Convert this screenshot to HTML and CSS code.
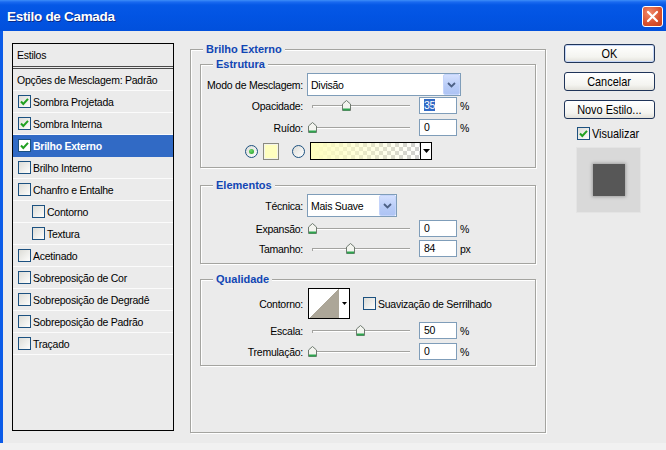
FILE: index.html
```html
<!DOCTYPE html>
<html>
<head>
<meta charset="utf-8">
<link rel="stylesheet" href="styles.css">
</head>
<body>
<div class="window">
  <div class="titlebar">
    <span class="title">Estilo de Camada</span>
    <span class="close"><svg width="13" height="13" viewBox="0 0 13 13"><path d="M2 2 L11 11 M11 2 L2 11" stroke="#fff" stroke-width="2.2" stroke-linecap="round"/></svg></span>
  </div>
  <div class="body">
    <div class="styles">
      <div class="row head">Estilos</div>
      <div class="row opt">Opções de Mesclagem: Padrão</div>
      <div class="row"><span class="cb"><svg width="11" height="11" viewBox="0 0 11 11"><path d="M2 5.5 L4.3 8 L9 2.8" fill="none" stroke="#21a121" stroke-width="2"/></svg></span><span class="txt">Sombra Projetada</span></div>
      <div class="row"><span class="cb"><svg width="11" height="11" viewBox="0 0 11 11"><path d="M2 5.5 L4.3 8 L9 2.8" fill="none" stroke="#21a121" stroke-width="2"/></svg></span><span class="txt">Sombra Interna</span></div>
      <div class="row sel"><span class="cb"><svg width="11" height="11" viewBox="0 0 11 11"><path d="M2 5.5 L4.3 8 L9 2.8" fill="none" stroke="#21a121" stroke-width="2"/></svg></span><span class="txt">Brilho Externo</span></div>
      <div class="row"><span class="cb"></span><span class="txt">Brilho Interno</span></div>
      <div class="row"><span class="cb"></span><span class="txt">Chanfro e Entalhe</span></div>
      <div class="row sub"><span class="cb"></span><span class="txt">Contorno</span></div>
      <div class="row sub"><span class="cb"></span><span class="txt">Textura</span></div>
      <div class="row"><span class="cb"></span><span class="txt">Acetinado</span></div>
      <div class="row"><span class="cb"></span><span class="txt">Sobreposição de Cor</span></div>
      <div class="row"><span class="cb"></span><span class="txt">Sobreposição de Degradê</span></div>
      <div class="row"><span class="cb"></span><span class="txt">Sobreposição de Padrão</span></div>
      <div class="row"><span class="cb"></span><span class="txt">Traçado</span></div>
    </div>

    <div class="group outer">
      <div class="legend outer-legend">Brilho Externo</div>

      <div class="group estrutura">
        <div class="legend">Estrutura</div>
        <div class="frow r-mode">
          <span class="lbl">Modo de Mesclagem:</span>
          <span class="select mode"><span class="val">Divisão</span><span class="dd"><svg width="9" height="6" viewBox="0 0 9 6"><path d="M1 1 L4.5 4.5 L8 1" fill="none" stroke="#4d6185" stroke-width="1.8"/></svg></span></span>
        </div>
        <div class="frow r1">
          <span class="lbl">Opacidade:</span>
          <span class="slider"><svg class="thumb" style="left:34px" width="9" height="11" viewBox="0 0 9 11"><path d="M4.5 0.5 L8.5 4 L8.5 10.5 L0.5 10.5 L0.5 4 Z" fill="#f3f4ef" stroke="#6f7a70"/><rect x="1" y="8.5" width="7" height="2" fill="#2ea44e"/></svg></span>
          <span class="num"><span class="hl">35</span></span><span class="unit">%</span>
        </div>
        <div class="frow r2">
          <span class="lbl">Ruído:</span>
          <span class="slider"><svg class="thumb" style="left:0px" width="9" height="11" viewBox="0 0 9 11"><path d="M4.5 0.5 L8.5 4 L8.5 10.5 L0.5 10.5 L0.5 4 Z" fill="#f3f4ef" stroke="#6f7a70"/><rect x="1" y="8.5" width="7" height="2" fill="#2ea44e"/></svg></span>
          <span class="num">0</span><span class="unit">%</span>
        </div>
        <div class="frow colors">
          <span class="radio on"><span class="dot"></span></span>
          <span class="swatch"></span>
          <span class="radio second"></span>
          <span class="gradient"><span class="gfill"></span><span class="garrow"><svg width="7" height="4" viewBox="0 0 7 4"><path d="M0 0 L7 0 L3.5 4 Z" fill="#000"/></svg></span></span>
        </div>
      </div>

      <div class="group elementos">
        <div class="legend">Elementos</div>
        <div class="frow r-mode">
          <span class="lbl">Técnica:</span>
          <span class="select tech"><span class="val">Mais Suave</span><span class="dd"><svg width="9" height="6" viewBox="0 0 9 6"><path d="M1 1 L4.5 4.5 L8 1" fill="none" stroke="#4d6185" stroke-width="1.8"/></svg></span></span>
        </div>
        <div class="frow r3">
          <span class="lbl">Expansão:</span>
          <span class="slider"><svg class="thumb" style="left:0px" width="9" height="11" viewBox="0 0 9 11"><path d="M4.5 0.5 L8.5 4 L8.5 10.5 L0.5 10.5 L0.5 4 Z" fill="#f3f4ef" stroke="#6f7a70"/><rect x="1" y="8.5" width="7" height="2" fill="#2ea44e"/></svg></span>
          <span class="num">0</span><span class="unit">%</span>
        </div>
        <div class="frow r3">
          <span class="lbl">Tamanho:</span>
          <span class="slider"><svg class="thumb" style="left:38px" width="9" height="11" viewBox="0 0 9 11"><path d="M4.5 0.5 L8.5 4 L8.5 10.5 L0.5 10.5 L0.5 4 Z" fill="#f3f4ef" stroke="#6f7a70"/><rect x="1" y="8.5" width="7" height="2" fill="#2ea44e"/></svg></span>
          <span class="num">84</span><span class="unit">px</span>
        </div>
      </div>

      <div class="group qualidade">
        <div class="legend">Qualidade</div>
        <div class="frow r-contour">
          <span class="lbl">Contorno:</span>
          <span class="contour"><span class="cpic"></span><span class="carrow"><svg width="5" height="3" viewBox="0 0 5 3"><path d="M0 0 L5 0 L2.5 3 Z" fill="#000"/></svg></span></span>
          <span class="cb aa"></span><span class="txt">Suavização de Serrilhado</span>
        </div>
        <div class="frow r3">
          <span class="lbl">Escala:</span>
          <span class="slider"><svg class="thumb" style="left:48px" width="9" height="11" viewBox="0 0 9 11"><path d="M4.5 0.5 L8.5 4 L8.5 10.5 L0.5 10.5 L0.5 4 Z" fill="#f3f4ef" stroke="#6f7a70"/><rect x="1" y="8.5" width="7" height="2" fill="#2ea44e"/></svg></span>
          <span class="num">50</span><span class="unit">%</span>
        </div>
        <div class="frow r4">
          <span class="lbl">Tremulação:</span>
          <span class="slider"><svg class="thumb" style="left:0px" width="9" height="11" viewBox="0 0 9 11"><path d="M4.5 0.5 L8.5 4 L8.5 10.5 L0.5 10.5 L0.5 4 Z" fill="#f3f4ef" stroke="#6f7a70"/><rect x="1" y="8.5" width="7" height="2" fill="#2ea44e"/></svg></span>
          <span class="num">0</span><span class="unit">%</span>
        </div>
      </div>
    </div>

    <div class="side">
      <div class="buttons">
        <span class="btn default"><span class="bt">OK</span></span>
        <span class="btn"><span class="bt">Cancelar</span></span>
        <span class="btn"><span class="bt">Novo Estilo...</span></span>
      </div>
      <div class="vis"><span class="cb"><svg width="11" height="11" viewBox="0 0 11 11"><path d="M2 5.5 L4.3 8 L9 2.8" fill="none" stroke="#21a121" stroke-width="2"/></svg></span><span class="vtxt">Visualizar</span></div>
      <div class="preview"><span class="square"></span></div>
    </div>
  </div>
</div>
</body>
</html>
```
FILE: styles.css
```css
* { box-sizing: border-box; }
html, body { margin: 0; padding: 0; }
body {
  background: #f1f1f1;
  font-family: "Liberation Sans", Arial, sans-serif;
  font-size: 10.5px;
  letter-spacing: -0.25px;
  color: #000;
}
.window {
  width: 666px;
  height: 443px;
  background: #ebebeb;
  display: flex;
  flex-direction: column;
  overflow: hidden;
}
.titlebar {
  height: 31px;
  flex: none;
  display: flex;
  align-items: center;
  justify-content: space-between;
  padding: 1px 3px 0 7px;
  background: linear-gradient(#3d8ef8 0, #1a6af0 2px, #0558e6 5px, #0254e3 50%, #0150dc 100%);
}
.title {
  color: #fff;
  font-weight: bold;
  font-size: 13.5px;
  letter-spacing: -0.3px;
  text-shadow: 1px 1px 0 #0b2a86;
}
.close {
  width: 21px;
  height: 21px;
  border: 1px solid #fff;
  border-radius: 3px;
  background: radial-gradient(circle at 35% 30%, #f08a6c, #d9502d 60%, #c2401c);
  display: flex;
  align-items: center;
  justify-content: center;
}
.body {
  flex: 1;
  border-left: 3px solid #0b5be8;
  display: flex;
  align-items: flex-start;
  padding: 12px 0 0 9px;
}

/* styles list */
.styles {
  width: 162px;
  height: 388px;
  flex: none;
  border: 1px solid #000;
}
.row {
  height: 22px;
  display: flex;
  align-items: center;
  padding-left: 5px;
  border-bottom: 1px solid #fbfbfb;
  white-space: nowrap;
}
.row.head {
  height: 25px;
  padding-left: 4px;
  border-bottom: 3px double #4a4a4a;
}
.row.opt { padding-left: 4px; }
.row.sub { padding-left: 19px; }
.row.sel {
  background: #316ac5;
  color: #fff;
  font-weight: bold;
  border-bottom-color: #316ac5;
}
.txt { margin-left: 2px; }
.cb {
  width: 13px;
  height: 13px;
  flex: none;
  border: 1px solid #1c5180;
  background: linear-gradient(135deg, #dcdcd7, #fdfdfc);
  display: inline-flex;
  align-items: center;
  justify-content: center;
}
.row.sel .cb { background: #fff; }

/* groups */
.group {
  border: 1px solid #a4a4a0;
  box-shadow: inset 1px 1px 0 #fff, 1px 1px 0 #fff;
}
.legend {
  width: fit-content;
  height: 13px;
  line-height: 13px;
  margin: -7px 0 0 12px;
  padding: 0 3px;
  background: #ebebeb;
  color: #1146b4;
  font-weight: bold;
  font-size: 11px;
  letter-spacing: 0;
}
.outer {
  width: 356px;
  height: 384px;
  flex: none;
  margin: 6px 0 0 16px;
  padding: 0 9px;
}
.outer-legend { margin-left: 3px; }
.estrutura { margin-top: 8px; padding-bottom: 7px; }
.elementos { margin-top: 17px; padding-bottom: 6px; }
.qualidade { margin-top: 15px; padding-bottom: 5px; }

.frow {
  display: flex;
  align-items: center;
  white-space: nowrap;
}
.r-mode { margin-top: 2px; height: 23px; }
.r1 { margin-top: 1px; height: 17px; }
.r2 { margin-top: 5px; height: 17px; }
.r3 { margin-top: 3px; height: 17px; }
.r4 { margin-top: 4px; height: 17px; }
.r-contour { margin-top: 2px; height: 31px; }
.colors { margin-top: 6px; height: 18px; padding-left: 44px; }

.lbl {
  width: 102px;
  flex: none;
  text-align: right;
}
.select {
  height: 23px;
  margin-left: 4px;
  border: 1px solid #7f9db9;
  background: #fff;
  display: flex;
  align-items: center;
  padding-left: 3px;
  flex: none;
}
.select.mode { width: 154px; }
.select.tech { width: 90px; }
.select .dd {
  width: 17px;
  height: 21px;
  margin-left: auto;
  border: 1px solid #c4d4fb;
  border-radius: 2px;
  background: linear-gradient(#d4e0fe, #b7cbf7 60%, #aec4f4);
  display: flex;
  align-items: center;
  justify-content: center;
}
.slider {
  position: relative;
  width: 102px;
  height: 11px;
  margin-left: 5px;
  flex: none;
}
.slider::before {
  content: "";
  position: absolute;
  left: 4px;
  right: 0;
  top: 5px;
  height: 1px;
  background: #a3a3a0;
  box-shadow: 0 1px 0 #fff;
}
.slider::after {
  content: "";
  position: absolute;
  left: 4px;
  top: 5px;
  width: 1px;
  height: 3px;
  background: #a3a3a0;
}
.thumb { position: absolute; top: 0; z-index: 1; }
.num {
  width: 38px;
  height: 17px;
  margin-left: 9px;
  border: 1px solid #7f9db9;
  background: #fff;
  padding-left: 4px;
  line-height: 15px;
  flex: none;
}
.hl { background: #316ac5; color: #fff; }
.unit { margin-left: 3px; }

.radio {
  width: 13px;
  height: 13px;
  border-radius: 50%;
  border: 1px solid #1c5180;
  background: linear-gradient(135deg, #dcdcd7, #fff);
  display: flex;
  align-items: center;
  justify-content: center;
  flex: none;
}
.radio .dot {
  width: 5px;
  height: 5px;
  border-radius: 50%;
  background: radial-gradient(circle at 40% 35%, #6fd96f, #1f9a1f);
}
.radio.second { margin-left: 13px; }
.swatch {
  width: 16px;
  height: 17px;
  margin-left: 5px;
  border: 1px solid #8a8a80;
  background: #ffffbf;
  box-shadow: inset 0 0 0 1px #f4f4e8;
  flex: none;
}
.gradient {
  width: 122px;
  height: 18px;
  margin-left: 5px;
  border: 1px solid #000;
  display: flex;
  flex: none;
}
.gfill {
  flex: 1;
  background:
    linear-gradient(to right, #ffffbf 0%, rgba(255, 255, 191, 0.6) 40%, rgba(255, 255, 191, 0) 100%),
    repeating-conic-gradient(#d0d0d0 0 25%, #fff 0 50%) 0 0 / 8px 8px;
}
.garrow {
  width: 11px;
  border-left: 1px solid #000;
  background: #fff;
  display: flex;
  align-items: center;
  justify-content: center;
}
.contour {
  width: 42px;
  height: 31px;
  margin-left: 5px;
  border: 1px solid #000;
  display: flex;
  flex: none;
  background: #fff;
}
.cpic {
  width: 30px;
  background: linear-gradient(to bottom right, #fff 50%, #aca698 50%);
}
.carrow {
  flex: 1;
  display: flex;
  align-items: center;
  justify-content: center;
}
.cb.aa { margin-left: 13px; }

/* side */
.side {
  margin: 1px 0 0 18px;
  flex: none;
  font-family: "Liberation Sans", Arial, sans-serif;
  font-size: 13px;
  letter-spacing: 0;
}
.buttons {
  display: flex;
  flex-direction: column;
  gap: 9px;
}
.btn {
  width: 91px;
  height: 19px;
  border: 1px solid #1f3459;
  border-radius: 3px;
  background: linear-gradient(#ffffff, #f4f4f0 70%, #e2e1da);
  display: flex;
  align-items: center;
  justify-content: center;
  line-height: 1;
}
.bt {
  display: inline-block;
  transform: scaleX(0.84);
  white-space: nowrap;
}
.btn.default { box-shadow: inset 0 0 0 1px #c4d5f6; }
.vis {
  margin-top: 8px;
  height: 13px;
  padding-left: 13px;
  display: flex;
  align-items: center;
}
.vtxt {
  display: inline-block;
  margin-left: 2px;
  transform: scaleX(0.84);
  transform-origin: left center;
  white-space: nowrap;
}
.preview {
  width: 65px;
  height: 66px;
  margin: 7px 0 0 12px;
  background: #d9d9d9;
  border: 1px solid #e4e4e4;
  display: flex;
  align-items: center;
  justify-content: center;
}
.square {
  width: 32px;
  height: 32px;
  background: #575757;
  box-shadow: 0 0 3px 1px #a0a0a0;
}
```
